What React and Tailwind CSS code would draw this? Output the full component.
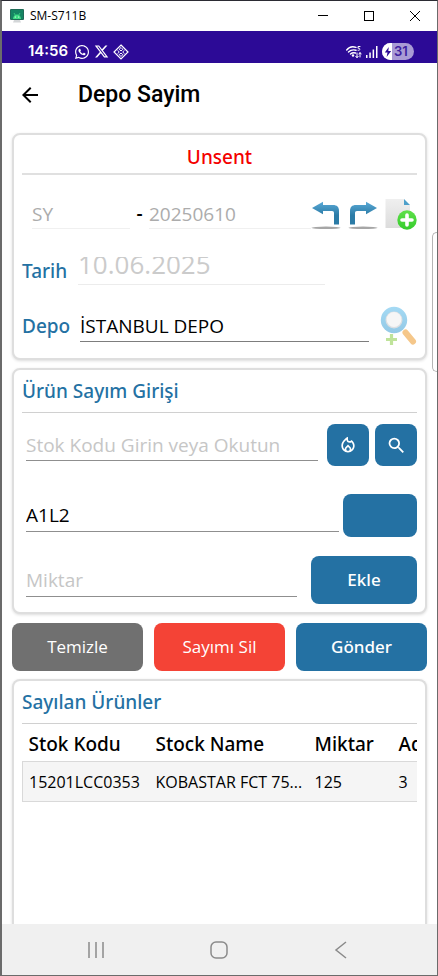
import { FaWhatsapp, FaXTwitter } from "react-icons/fa6"
import { MdArrowBack, MdOutlineLocalFireDepartment, MdSearch } from "react-icons/md"

const rows = [
  { code: "15201LCC0353", name: "KOBASTAR FCT 75...", amount: "125", count: "3" },
]

function TitleBar() {
  return (
    <div className="flex h-[30px] items-center justify-between bg-white pl-2 pr-4">
      <div className="flex items-center gap-[6px]">
        <svg width="14" height="14" viewBox="0 0 14 14">
          <rect width="14" height="11" rx="1" fill="#1f6b57" />
          <rect x="1" y="1" width="12" height="9" fill="#158463" />
          <path d="M3 10a4 4.500 0 0 1 8 0z" fill="#3ddc84" />
          <path d="M4 4l1.200 2M10 4l-1.200 2" stroke="#3ddc84" strokeWidth="0.800" />
          <circle cx="5.300" cy="8" r="0.600" fill="#fff" />
          <circle cx="8.700" cy="8" r="0.600" fill="#fff" />
          <path d="M4 11h6l1 2.500H3z" fill="#d3d6d8" />
        </svg>
        <span className="font-['Open_Sans',sans-serif] text-xs text-black">SM-S711B</span>
      </div>
      <div className="flex items-center gap-[34px]">
        <button aria-label="Minimize">
          <svg width="12" height="12" viewBox="0 0 12 12" stroke="#000">
            <path d="M1 5.500h10" />
          </svg>
        </button>
        <button aria-label="Maximize">
          <svg width="12" height="12" viewBox="0 0 12 12" fill="none" stroke="#000">
            <rect x="1.500" y="1.500" width="9" height="9" />
          </svg>
        </button>
        <button aria-label="Close">
          <svg width="12" height="12" viewBox="0 0 12 12" stroke="#000">
            <path d="M1 1l10 10M11 1L1 11" />
          </svg>
        </button>
      </div>
    </div>
  )
}

function StatusBar() {
  return (
    <div className="flex h-8 items-center justify-between bg-[#2c0a96] pl-[26px] pr-[23px] pt-[9px] text-white">
      <div className="flex items-center gap-1">
        <span className="mr-[2px] font-['Inter',sans-serif] text-[15px] font-semibold">14:56</span>
        <FaWhatsapp size={16} />
        <FaXTwitter size={15} />
        <svg width="16" height="16" viewBox="0 0 16 16" fill="none" stroke="#fff">
          <path d="M8 1l7 7-7 7-7-7z" strokeWidth="1.200" />
          <path d="M8 3.500l1.800 1.800L8 7 6.200 5.300zM4.500 6.300L6.300 8 4.500 9.700M11.500 6.300L9.700 8l1.800 1.700M8 9l1.800 1.700L8 12.500l-1.800-1.800z" />
        </svg>
      </div>
      <div className="flex items-center gap-1">
        <svg width="16" height="14" viewBox="0 0 16 14" fill="none" stroke="#fff" strokeLinecap="round">
          <path d="M0.700 5C3 2 7 1.300 10 2.400M2.500 7C4.500 5 7 4.400 10 5.200M4.500 9c1.500-1.300 3-1.600 5-1" strokeWidth="1.400" />
          <circle cx="7" cy="10.500" r="1.200" fill="#fff" stroke="none" />
          <path d="M14 1.500h-2v1.800c2.600-.5 2.600 2.500 0 2" strokeWidth="1" />
          <path d="M11 8v4.500M9.800 11.300L11 12.700l1.200-1.400M14 12V7.800M12.900 9L14 7.600 15.200 9" strokeWidth="1" />
        </svg>
        <svg width="12" height="12" viewBox="0 0 12 12" fill="#fff">
          <rect x="0" y="9" width="1.500" height="3" />
          <rect x="3.300" y="6.500" width="1.500" height="5.500" />
          <rect x="6.600" y="3.500" width="1.500" height="8.500" />
          <rect x="10" y="0" width="1.500" height="12" />
        </svg>
        <div className="flex h-[17px] w-8 items-center overflow-hidden rounded-full bg-[#a99bd5]">
          <div className="flex h-full w-[10px] items-center justify-end bg-white">
            <svg width="8" height="10" viewBox="0 0 8 10">
              <path d="M4.800 0L0.800 5.600h2.700L2.600 10l4.600-5.900H4.300z" fill="#2c0a96" />
            </svg>
          </div>
          <span className="ml-[2px] font-['Inter',sans-serif] text-[13px] font-semibold leading-none text-[#3d1d9f]">31</span>
        </div>
      </div>
    </div>
  )
}

function UndoIcon() {
  return (
    <svg width="30" height="30" viewBox="0 0 30 30">
      <defs>
        <linearGradient id="turn" x1="0" y1="0" x2="0" y2="1">
          <stop offset="0" stopColor="#5aa9d6" />
          <stop offset="0.600" stopColor="#2b7ba6" />
          <stop offset="1" stopColor="#2b7ba6" />
        </linearGradient>
      </defs>
      <ellipse cx="15" cy="27.800" rx="14.500" ry="1.200" fill="#a6a6a6" />
      <path d="M1 8L12 1.700V5h10c4 0 6 2 6 6v13.500h-5V13c0-1.200-.6-2-2-2h-9v3.300z" fill="url(#turn)" />
    </svg>
  )
}

function NewDocIcon() {
  return (
    <svg width="32" height="32" viewBox="0 0 32 32">
      <defs>
        <linearGradient id="sheet" x1="0" y1="0" x2="0" y2="1">
          <stop offset="0" stopColor="#efefef" />
          <stop offset="1" stopColor="#dcdcdc" />
        </linearGradient>
        <linearGradient id="plus" x1="0" y1="0" x2="0" y2="1">
          <stop offset="0" stopColor="#5fe04a" />
          <stop offset="1" stopColor="#35cc2c" />
        </linearGradient>
      </defs>
      <path d="M0.500 0h18.500v6h6v23H0.500z" fill="url(#sheet)" />
      <path d="M19 0l6 6h-6z" fill="#4d9fca" />
      <circle cx="22" cy="21" r="9.700" fill="url(#plus)" />
      <path d="M22 16v10M17 21h10" stroke="#fff" strokeWidth="3.600" strokeLinecap="round" />
    </svg>
  )
}

function FindIcon() {
  return (
    <svg width="37" height="40" viewBox="0 0 37 40">
      <defs>
        <linearGradient id="ring" x1="0" y1="0" x2="0" y2="1">
          <stop offset="0" stopColor="#a5daf4" />
          <stop offset="1" stopColor="#93c9e6" />
        </linearGradient>
      </defs>
      <path d="M25.500 26.500l7.500 9" stroke="#f5c78a" strokeWidth="6" strokeLinecap="round" />
      <circle cx="14" cy="14" r="13.200" fill="url(#ring)" />
      <circle cx="14" cy="14" r="8.500" fill="#dcdfe2" />
      <circle cx="14" cy="13.500" r="7.400" fill="#f6f6f6" />
      <path d="M11.500 28v11M6 33.500h11" stroke="#bfe39a" strokeWidth="3.200" />
    </svg>
  )
}

function Card({ className = "", children }) {
  return (
    <section className={`border-2 border-[#dedede] bg-white px-2 shadow-[0_1px_3px_rgba(0,0,0,0.14)] ${className}`}>
      {children}
    </section>
  )
}

function CardTitle({ children }) {
  return (
    <h2 className="flex h-[43px] items-center border-b border-[#d0d0d0] font-['Noto_Sans',sans-serif] text-[19px] font-medium text-[#2471a3]">
      {children}
    </h2>
  )
}

export default function App() {
  return (
    <div className="relative flex min-h-screen flex-col border border-l-2 border-[#6b6b6b] border-t-[#2b2b33] bg-white font-['Open_Sans','Noto_Sans',sans-serif] text-black">
      <TitleBar />
      <StatusBar />
      <header className="flex h-[70px] items-center gap-9 pb-[6px] pl-4">
        <button aria-label="Geri">
          <MdArrowBack size={24} />
        </button>
        <h1 className="font-['Roboto',sans-serif] text-[23px] font-medium">Depo Sayim</h1>
      </header>

      <main className="flex flex-1 flex-col px-[10px]">
        <Card className="rounded-lg pb-3">
          <h2 className="flex h-10 items-center justify-center border-b-2 border-[#e0e0e0] pt-[6px] font-['Noto_Sans',sans-serif] text-[19px] font-medium text-[#f40000]">
            Unsent
          </h2>
          <div className="mt-6 flex h-[30px] items-start pl-[10px]">
            <input
              aria-label="Seri"
              disabled
              defaultValue="SY"
              className="h-[30px] w-[98px] border-b border-[#f0f0f0] text-[19px] text-[#acacac]"
            />
            <span className="w-[19px] text-center text-[19px] leading-[28px] font-semibold">-</span>
            <input
              aria-label="Evrak no"
              disabled
              defaultValue="20250610"
              className="h-[30px] min-w-0 flex-1 border-b border-[#f0f0f0] text-[19px] text-[#acacac]"
            />
            <div className="flex gap-[7px]">
              <button aria-label="Önceki"><UndoIcon /></button>
              <button aria-label="Sonraki" className="-scale-x-100"><UndoIcon /></button>
              <button aria-label="Yeni"><NewDocIcon /></button>
            </div>
          </div>
          <div className="mt-7 flex h-7 items-center">
            <label htmlFor="tarih" className="w-14 font-['Noto_Sans',sans-serif] text-[19px] font-medium text-[#2471a3]">Tarih</label>
            <div className="flex h-7 w-5/8 items-end overflow-hidden border-b border-[#ececec]">
              <input
                id="tarih"
                disabled
                defaultValue="10.06.2025"
                className="h-10 w-full shrink-0 text-[26px] text-[#cbcbcb]"
              />
            </div>
          </div>
          <div className="mt-[21px] flex h-10 items-center">
            <label htmlFor="depo" className="w-[58px] font-['Noto_Sans',sans-serif] text-[19px] font-medium text-[#2471a3]">Depo</label>
            <input
              id="depo"
              defaultValue="İSTANBUL DEPO"
              className="h-8 min-w-0 flex-1 border-b border-[#7d7d7d] text-[19px] outline-none"
            />
            <button aria-label="Depo ara" className="ml-[11px]"><FindIcon /></button>
          </div>
        </Card>

        <Card className="mt-2 rounded-lg pb-2">
          <CardTitle>Ürün Sayım Girişi</CardTitle>
          <div className="mt-[11px] flex h-[42px] items-center gap-[6px] pl-1">
            <input
              aria-label="Stok kodu"
              placeholder="Stok Kodu Girin veya Okutun"
              className="mr-[3px] h-8 min-w-0 flex-1 border-b border-[#8f8f8f] text-[19px] outline-none placeholder:text-[#c6c6c6]"
            />
            <button aria-label="Okut" className="flex h-[42px] w-[42px] items-center justify-center rounded-lg bg-[#2471a3] text-white">
              <MdOutlineLocalFireDepartment size={20} />
            </button>
            <button aria-label="Ara" className="flex h-[42px] w-[42px] items-center justify-center rounded-lg bg-[#2471a3] text-white">
              <MdSearch size={21} />
            </button>
          </div>
          <div className="mt-7 flex h-[43px] items-center gap-1 pl-1">
            <input
              aria-label="Raf"
              defaultValue="A1L2"
              className="h-8 min-w-0 flex-1 border-b border-[#8f8f8f] text-[19px] outline-none"
            />
            <button aria-label="Raf seç" className="h-[43px] w-[74px] rounded-lg bg-[#2471a3]"></button>
          </div>
          <div className="mt-[19px] flex h-12 items-center gap-[14px] pl-1">
            <input
              aria-label="Miktar"
              placeholder="Miktar"
              className="h-[34px] min-w-0 flex-1 border-b border-[#8f8f8f] text-[19px] outline-none placeholder:text-[#c6c6c6]"
            />
            <button className="h-12 w-[106px] rounded-lg bg-[#2471a3] font-['Noto_Sans',sans-serif] text-[17px] font-medium text-white">Ekle</button>
          </div>
        </Card>

        <div className="mt-[9px] mb-2 grid grid-cols-3 gap-[11px] text-[17px] text-white">
          <button className="h-12 rounded-lg bg-[#707070]">Temizle</button>
          <button className="h-12 rounded-lg bg-[#f44336]">Sayımı Sil</button>
          <button className="h-12 rounded-lg bg-[#2471a3] font-['Noto_Sans',sans-serif] font-medium">Gönder</button>
        </div>

        <Card className="flex-1 rounded-t-lg border-b-0">
          <CardTitle>Sayılan Ürünler</CardTitle>
          <div className="overflow-hidden">
            <table className="w-[480px] table-fixed border-collapse text-left">
              <thead className="font-['Noto_Sans',sans-serif]">
                <tr className="h-[37px] text-[19px]">
                  <th className="w-[127px] px-[6px] pt-1 font-medium">Stok Kodu</th>
                  <th className="w-[159px] px-[6px] pt-1 font-medium">Stock Name</th>
                  <th className="w-[84px] px-[6px] pt-1 font-medium">Miktar</th>
                  <th className="px-[6px] pt-1 font-medium">Adet</th>
                </tr>
              </thead>
              <tbody>
                {rows.map((row) => (
                  <tr key={row.code} className="h-10 border border-[#d9d9d9] bg-[#f5f5f5] text-base">
                    <td className="px-[6px] pt-[2px]">{row.code}</td>
                    <td className="px-[6px] pt-[2px] whitespace-nowrap">{row.name}</td>
                    <td className="px-[6px] pt-[2px]">{row.amount}</td>
                    <td className="px-[6px] pt-[2px]">{row.count}</td>
                  </tr>
                ))}
              </tbody>
            </table>
          </div>
        </Card>
      </main>

      <nav className="grid h-[51px] grid-cols-3 items-center justify-items-center bg-[#f0f0f0] pl-8 pr-[34px]">
        <button aria-label="Son uygulamalar">
          <svg width="18" height="18" viewBox="0 0 18 18" stroke="#8a8a8a" strokeWidth="1.500">
            <path d="M2 1v16M9 1v16M16 1v16" />
          </svg>
        </button>
        <button aria-label="Ana ekran">
          <svg width="18" height="18" viewBox="0 0 18 18" fill="none" stroke="#8a8a8a" strokeWidth="1.500">
            <rect x="1" y="1" width="16" height="16" rx="5" />
          </svg>
        </button>
        <button aria-label="Geri git">
          <svg width="18" height="18" viewBox="0 0 18 18" fill="none" stroke="#8a8a8a" strokeWidth="1.500">
            <path d="M13 1L3 9l10 8" />
          </svg>
        </button>
      </nav>

      {/* edge panel handle */}
      <div className="absolute top-[231px] right-0 h-[140px] w-[5px] rounded-l-md border border-r-0 border-[#b5b5b5] bg-white"></div>
    </div>
  )
}
